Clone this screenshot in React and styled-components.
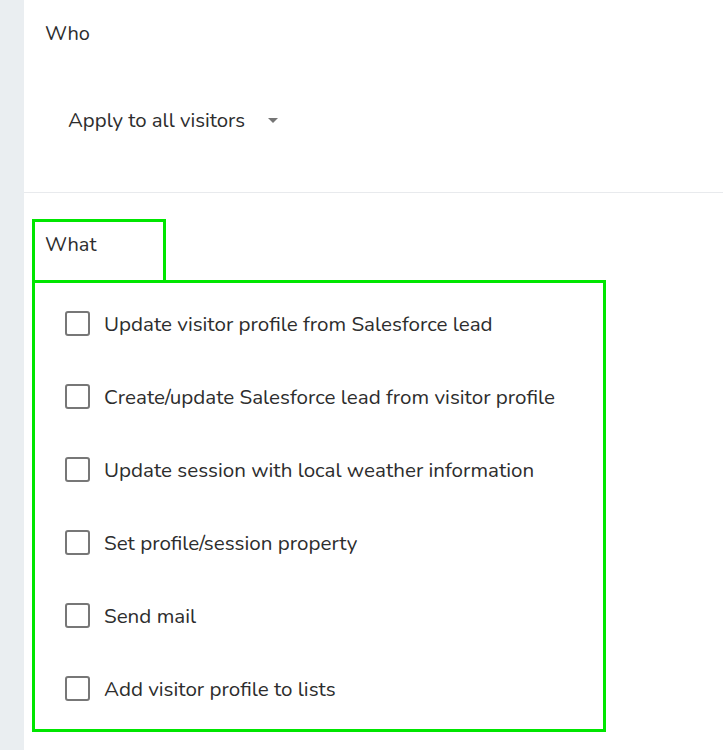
import React from 'react';
import styled, { createGlobalStyle } from 'styled-components';

const GlobalStyle = createGlobalStyle`
  body {
    margin: 0;
    background: #fff;
    font-family: "Nunito", "Lato", "Noto Sans", sans-serif;
    color: #2d2d2d;
  }
`;

const Page = styled.div`
  display: flex;
  min-height: 750px;
`;

const Sidebar = styled.div`
  width: 24px;
  flex-shrink: 0;
  background: #eaeef1;
`;

const Main = styled.div`
  flex: 1;
  display: flex;
  flex-direction: column;
`;

const WhoSection = styled.section`
  height: 193px;
  box-sizing: border-box;
  border-bottom: 1px solid #e8eaed;
  padding: 21px 0 0 21px;
`;

const Label = styled.div`
  font-size: 20px;
  line-height: 26px;
`;

const Select = styled.div`
  display: flex;
  align-items: center;
  gap: 23px;
  margin: 60px 0 0 23px;
  font-size: 20.4px;
  line-height: 26px;
`;

const Caret = styled.span`
  width: 0;
  height: 0;
  border-left: 5px solid transparent;
  border-right: 5px solid transparent;
  border-top: 5px solid #757575;
`;

const WhatSection = styled.section`
  padding: 26px 0 0 8px;
`;

const Tab = styled.div`
  width: 134px;
  height: 61px;
  box-sizing: border-box;
  border: 3px solid #00e600;
  border-bottom: none;
  padding: 10px 0 0 10px;
`;

const List = styled.div`
  width: 574px;
  height: 452px;
  box-sizing: border-box;
  border: 3px solid #00e600;
  padding: 4px 0 0 30px;
`;

const Row = styled.label`
  display: flex;
  align-items: center;
  height: 73px;
  gap: 14px;
  font-size: 20.6px;
`;

const Box = styled.span`
  width: 21px;
  height: 21px;
  border: 2px solid #777;
  border-radius: 3px;
  flex-shrink: 0;
`;

const actions = [
  'Update visitor profile from Salesforce lead',
  'Create/update Salesforce lead from visitor profile',
  'Update session with local weather information',
  'Set profile/session property',
  'Send mail',
  'Add visitor profile to lists',
];

const App = () => (
  <>
    <GlobalStyle />
    <Page>
      <Sidebar />
      <Main>
        <WhoSection>
          <Label>Who</Label>
          <Select>
            Apply to all visitors
            <Caret />
          </Select>
        </WhoSection>
        <WhatSection>
          <Tab>
            <Label>What</Label>
          </Tab>
          <List>
            {actions.map(text => (
              <Row key={text}>
                <Box />
                {text}
              </Row>
            ))}
          </List>
        </WhatSection>
      </Main>
    </Page>
  </>
);

export default App;
